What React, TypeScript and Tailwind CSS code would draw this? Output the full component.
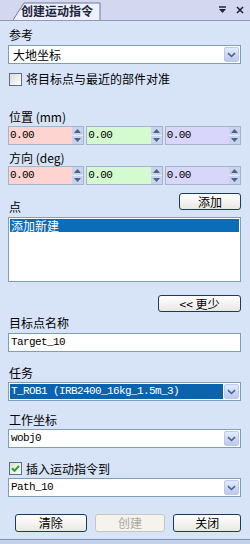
import React from "react";

const cjk = "font-['SimSun','Noto_Sans_CJK_SC',sans-serif]";
const mono = "font-['Liberation_Mono','Noto_Sans_CJK_SC',monospace]";

function Label({ text, className = "" }: { text: string; className?: string }) {
  return (
    <div className={`h-[14px] pl-[1px] text-[12px] leading-[14px] text-black ${className}`}>{text}</div>
  );
}

function ArrowBtn() {
  return (
    <div className="mr-[1px] flex h-[15px] w-[15px] items-center justify-center rounded-[2px] border border-[#b9c9ef] bg-gradient-to-b from-[#e3ebfd] to-[#b9c9f0]">
      <svg width="9" height="6" viewBox="0 0 9 6">
        <path d="M1 1.2 L4.5 4.5 L8 1.2" fill="none" stroke="#4d6185" strokeWidth="1.6" />
      </svg>
    </div>
  );
}

function Combo({
  value,
  selected = false,
  plain = false,
  className = "",
}: {
  value: string;
  selected?: boolean;
  plain?: boolean;
  className?: string;
}) {
  return (
    <div className={`flex h-[19px] items-center border border-[#7f9db9] bg-white ${className}`}>
      <div className="flex h-full flex-1 items-center p-[1px]">
        <span
          className={`flex h-full flex-1 items-center pl-[1px] ${
            plain ? "pl-[3px] text-[12px]" : `${mono} text-[11px] tracking-[-0.6px]`
          } ${selected ? "bg-[#0b62ad] text-white" : "text-black"}`}
        >
          {value}
        </span>
      </div>
      <ArrowBtn />
    </div>
  );
}

function Spin({ bg }: { bg: string }) {
  return (
    <div className={`flex h-[19px] border border-[#a5b3cb] ${bg}`}>
      <span className={`flex flex-1 items-center pl-[1px] ${mono} text-[11px] tracking-[-0.6px] text-black`}>0.00</span>
      <div className="flex w-[11px] flex-col bg-[#c8d4ee]">
        <div className="flex flex-1 items-center justify-center border-b border-[#e4eaf8]">
          <svg width="7" height="4" viewBox="0 0 7 4">
            <path d="M0 4 L3.5 0 L7 4 Z" fill="#4d6185" />
          </svg>
        </div>
        <div className="flex flex-1 items-center justify-center">
          <svg width="7" height="4" viewBox="0 0 7 4">
            <path d="M0 0 L3.5 4 L7 0 Z" fill="#4d6185" />
          </svg>
        </div>
      </div>
    </div>
  );
}

function SpinRow({ className = "" }: { className?: string }) {
  return (
    <div className={`grid grid-cols-3 gap-[2px] ${className}`}>
      <Spin bg="bg-[#fdd4d0]" />
      <Spin bg="bg-[#d4fbcf]" />
      <Spin bg="bg-[#d8d6fa]" />
    </div>
  );
}

function Check({ checked }: { checked?: boolean }) {
  return (
    <div className="flex h-[13px] w-[13px] items-center justify-center border border-[#5a6e86] bg-gradient-to-br from-[#dcdcd6] to-white">
      {checked && (
        <svg width="9" height="9" viewBox="0 0 9 9">
          <path d="M1 4.2 L3.5 6.8 L8 1.8" fill="none" stroke="#21a121" strokeWidth="2" />
        </svg>
      )}
    </div>
  );
}

function Btn({ text, disabled, className = "" }: { text: string; disabled?: boolean; className?: string }) {
  return (
    <div
      className={`flex items-center justify-center rounded-[3px] border text-[12px] ${
        disabled
          ? "border-[#c9c7ba] bg-[#f4f3ee] text-[#aca899]"
          : "border-[#1c3a5e] bg-gradient-to-b from-white to-[#e9e8e2] text-black"
      } ${className}`}
    >
      {text}
    </div>
  );
}

export default function App() {
  return (
    <div className={`flex h-[544px] w-[250px] flex-col bg-[#d7e4f7] ${cjk}`}>
      {/* title bar */}
      <div className="flex h-[21px] items-end border-b border-[#8e99bf] bg-[#d3d7ef]">
        <div className="relative ml-[13px] flex h-[18px] w-[88px] items-center">
          <svg className="absolute inset-0" width="88" height="18" viewBox="0 0 88 18">
            <path d="M0 18 L11 1 L87 1 L87 18" fill="#eef0fa" stroke="#6e7898" strokeWidth="1" />
          </svg>
          <span className="relative pl-[8px] text-[12px] font-bold text-[#1c2540]">创建运动指令</span>
        </div>
        <div className="ml-auto mr-[6px] flex h-[20px] items-center gap-[9px]">
          <svg width="9" height="8" viewBox="0 0 9 8">
            <path d="M1 1 H8" stroke="#1c2540" strokeWidth="1.5" />
            <path d="M1 3 L4.5 7 L8 3 Z" fill="#1c2540" />
          </svg>
          <svg width="8" height="8" viewBox="0 0 8 8">
            <path d="M1 1 L7 7 M7 1 L1 7" stroke="#1c2540" strokeWidth="1.6" />
          </svg>
        </div>
      </div>

      <div className="flex flex-1 flex-col pl-[8px] pr-[9px]">
        <Label text="参考" className="mt-[7px]" />
        <Combo value="大地坐标" plain className="mt-[3px]" />
        <div className="mt-[8px] flex h-[14px] items-center gap-[4px] pl-[1px] text-[12px] text-black">
          <Check />
          <span>将目标点与最近的部件对准</span>
        </div>

        <Label text="位置 (mm)" className="mt-[24px]" />
        <SpinRow className="mt-[2px]" />
        <Label text="方向 (deg)" className="mt-[6px]" />
        <SpinRow className="mt-[1px]" />

        <div className="mt-[8px] flex h-[21px] items-end justify-between">
          <Label text="点" />
          <Btn text="添加" className="mb-[4px] h-[17px] w-[62px]" />
        </div>
        <div className="mt-[3px] h-[65px] border border-[#7f9db9] bg-white p-[1px]">
          <div className="h-[13px] bg-[#0b6cb8] pl-[1px] text-[12px] leading-[13px] text-white">添加新建</div>
        </div>

        <div className="mt-[13px] flex justify-end">
          <Btn text="<< 更少" className="h-[17px] w-[83px]" />
        </div>

        <Label text="目标点名称" className="mt-[4px]" />
        <div className="mt-[3px] flex h-[19px] items-center border border-[#7f9db9] bg-white pl-[2px]">
          <span className={`${mono} text-[11px] tracking-[-0.6px] text-black`}>Target_10</span>
        </div>

        <Label text="任务" className="mt-[14px]" />
        <Combo value="T_ROB1 (IRB2400_16kg_1.5m_3)" selected className="mt-[2px]" />

        <Label text="工作坐标" className="mt-[12px]" />
        <Combo value="wobj0" className="mt-[2px]" />

        <div className="mt-[13px] flex h-[15px] items-center gap-[4px] pl-[1px] text-[12px] text-black">
          <Check checked />
          <span>插入运动指令到</span>
        </div>
        <Combo value="Path_10" className="mt-[2px]" />

        <div className="mt-[17px] flex h-[18px] pl-[7px]">
          <Btn text="清除" className="h-full w-[72px]" />
          <Btn text="创建" disabled className="ml-[8px] h-full w-[71px]" />
          <Btn text="关闭" className="ml-[8px] h-full w-[68px]" />
        </div>
      </div>

      <div className="h-[5px] border-t border-[#7d93b8] bg-[#c3d1e8]" />
    </div>
  );
}
